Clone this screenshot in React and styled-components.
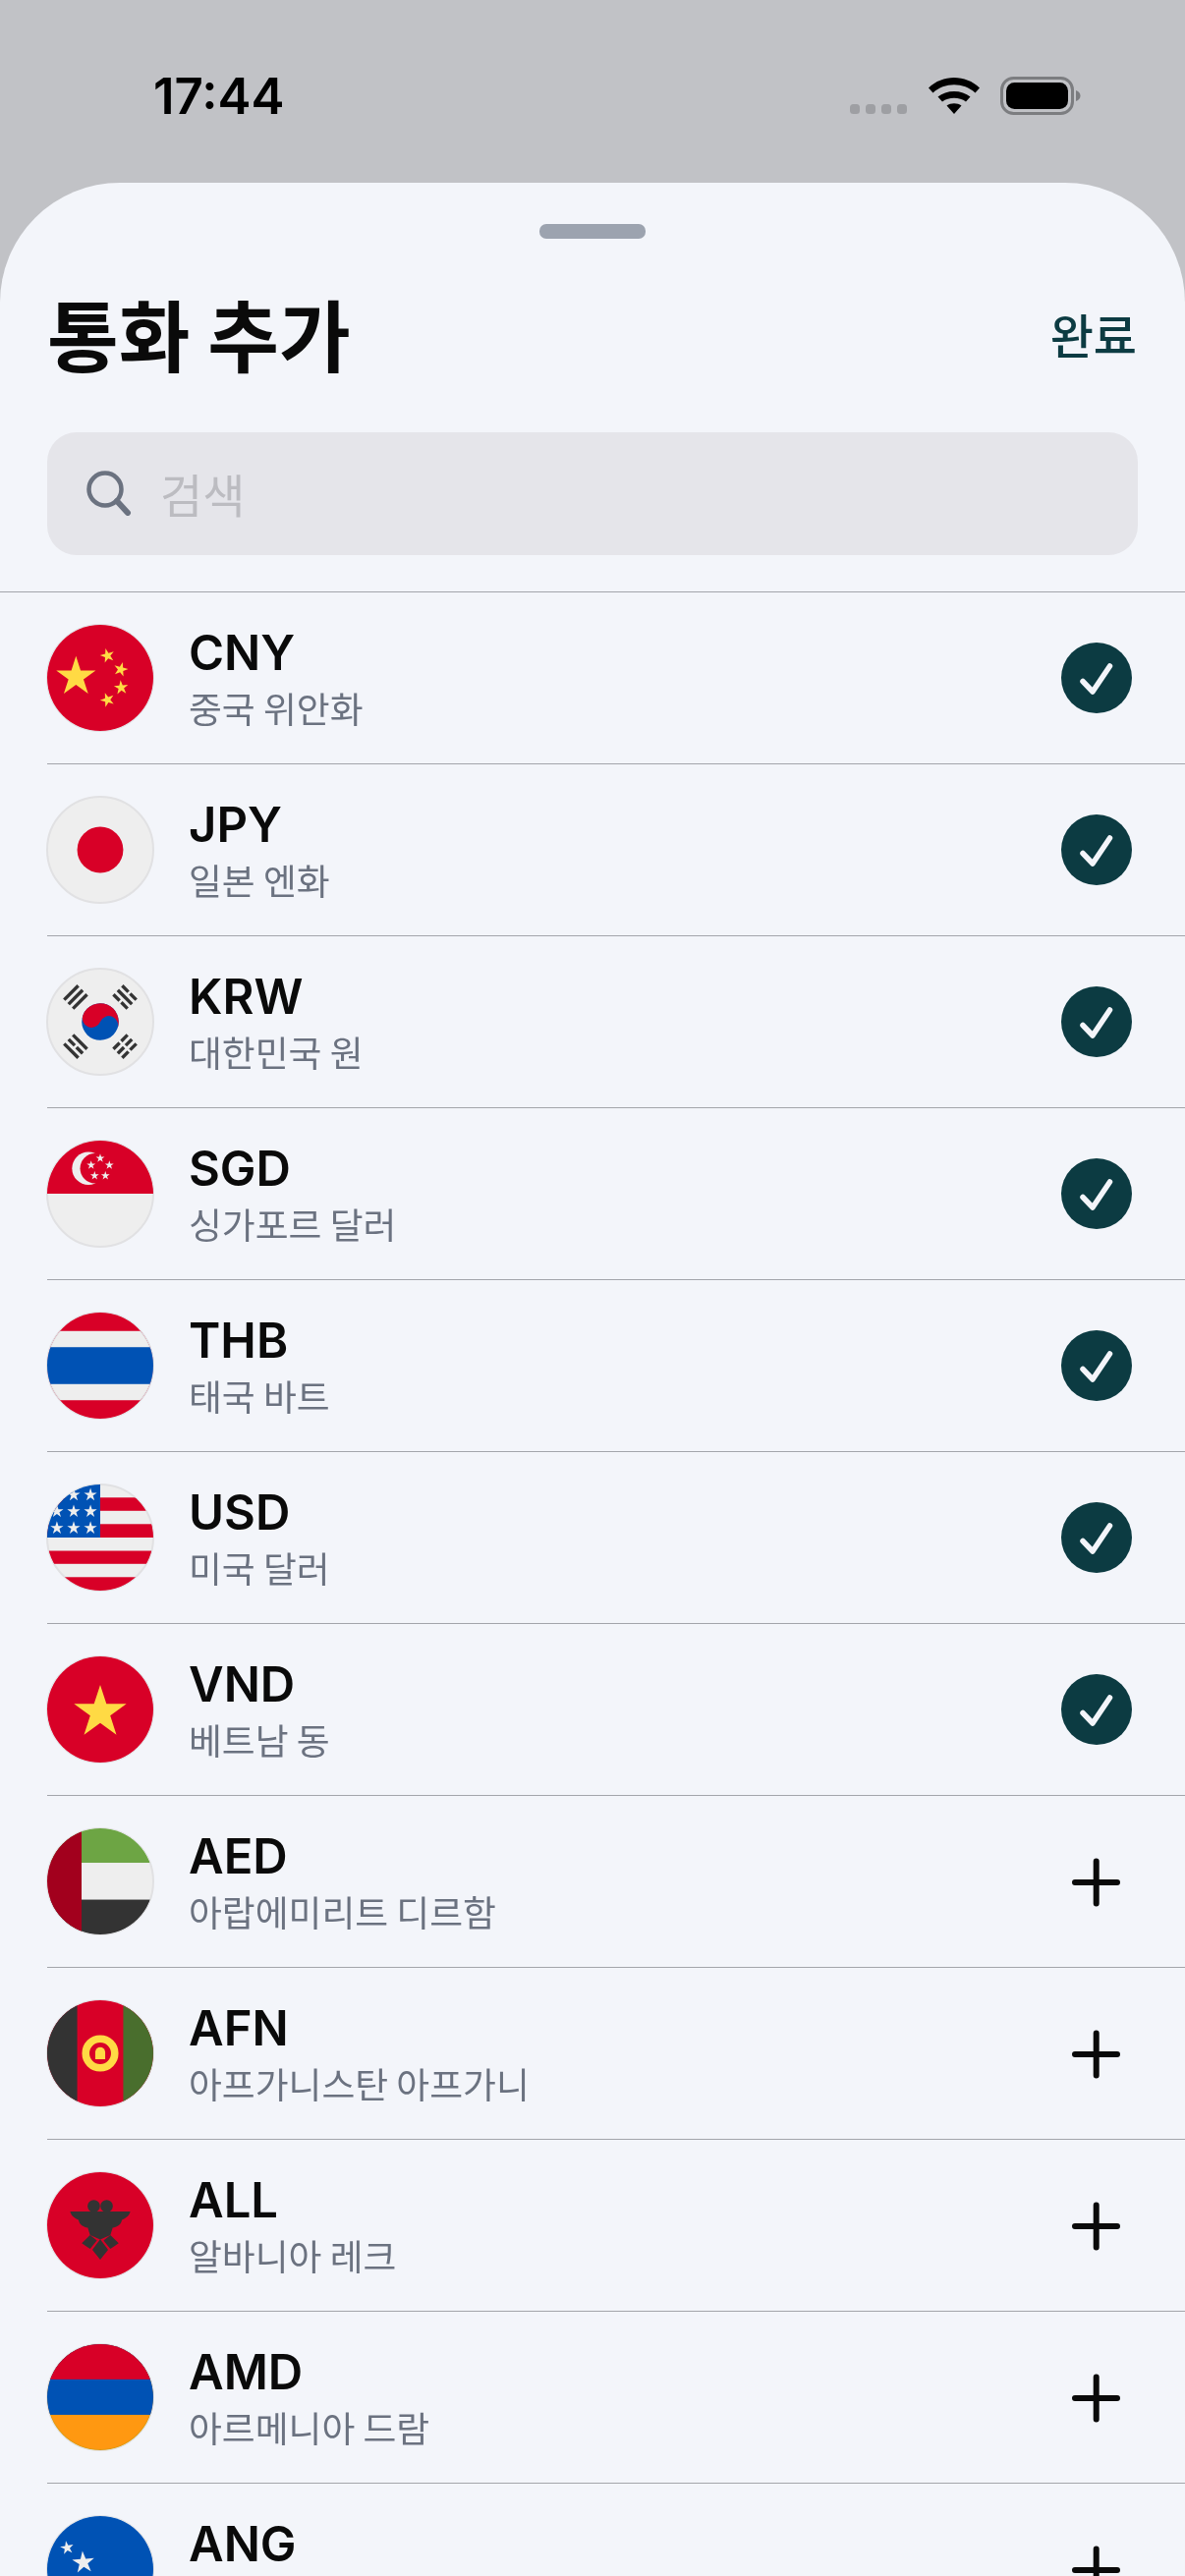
import React from "react";
import styled, { createGlobalStyle } from "styled-components";

const GlobalStyle = createGlobalStyle`
  html, body {
    margin: 0;
    padding: 0;
    width: 1206px;
    height: 2622px;
    overflow: hidden;
    background: #c1c2c6;
  }
  * { box-sizing: border-box; }
`;

const Page = styled.div`
  width: 1206px;
  height: 2622px;
  overflow: hidden;
  font-family: Inter, "Noto Sans CJK KR", sans-serif;
`;

const StatusBar = styled.div`
  height: 186px;
  padding: 78px 106px 0 156px;
  display: flex;
  justify-content: space-between;
  align-items: flex-start;
`;

const Time = styled.div`
  font-size: 51px;
  line-height: 40px;
  font-weight: 600;
  color: #000;
`;

const StatusIcons = styled.svg`
  display: block;
  width: 235px;
  height: 40px;
`;

const Sheet = styled.div`
  background: #f3f5fa;
  border-radius: 122px 122px 0 0;
  height: 2436px;
  padding-top: 42px;
`;

const Handle = styled.div`
  width: 108px;
  height: 15px;
  border-radius: 7px;
  background: #9ca3af;
  margin: 0 auto;
`;

const Header = styled.div`
  display: flex;
  justify-content: space-between;
  align-items: center;
  padding: 0 49px 6px 48px;
  height: 197px;
`;

const Title = styled.h1`
  margin: 0;
  font: 700 79px/100px "Noto Sans CJK KR", sans-serif;
  color: #0a0a0a;
`;

const DoneButton = styled.button`
  border: none;
  background: none;
  padding: 0;
  font: 500 48px/60px "Noto Sans CJK KR", sans-serif;
  color: #0c3b42;
`;

const SearchBox = styled.div`
  margin: 0 48px;
  height: 125px;
  background: #e5e5ea;
  border-radius: 30px;
  display: flex;
  align-items: center;
  gap: 29px;
  padding: 0 0 2px 40px;
`;

const Placeholder = styled.span`
  font: 400 47px/60px "Noto Sans CJK KR", sans-serif;
  color: #bcbcc1;
`;

const List = styled.div`
  margin-top: 37px;
  border-top: 1.5px solid #a3a5ab;
`;

const Row = styled.div`
  height: 175px;
  margin-left: 48px;
  padding-right: 54px;
  display: flex;
  align-items: center;
  border-bottom: 1.5px solid #a3a5ab;
`;

const FlagWrap = styled.svg`
  display: block;
  width: 108px;
  height: 108px;
  flex: none;
  overflow: visible;
`;

const FlagRing = styled.circle`
  fill: none;
  stroke: #e1e1e3;
  stroke-width: 9.5;
  mix-blend-mode: darken;
`;

const RowText = styled.div`
  flex: 1;
  align-self: flex-start;
  margin-left: 36px;
  padding-top: 33px;
  display: flex;
  flex-direction: column;
  gap: 3px;
`;

const Code = styled.div`
  font-size: 49px;
  line-height: 58px;
  font-weight: 600;
  color: #0a0a0a;
`;

const Name = styled.div`
  font: 400 36.8px/46px "Noto Sans CJK KR", sans-serif;
  color: #6b7280;
`;

const ActionIcon = styled.svg`
  display: block;
  width: 72px;
  height: 72px;
  flex: none;
`;

const RED = "#d80027";
const YELLOW = "#ffda44";
const BLUE = "#0052b4";
const LIGHT = "#eeeeee";
const DARK = "#333333";

const starPoints = (cx, cy, r, rot = 0) => {
  const pts = [];
  for (let i = 0; i < 10; i++) {
    const rad = i % 2 === 0 ? r : r * 0.382;
    const a = ((-90 + rot + i * 36) * Math.PI) / 180;
    pts.push(`${(cx + rad * Math.cos(a)).toFixed(1)},${(cy + rad * Math.sin(a)).toFixed(1)}`);
  }
  return pts.join(" ");
};

const Star = ({ x, y, r, rot, fill = LIGHT }) => (
  <polygon points={starPoints(x, y, r, rot)} fill={fill} />
);

// one trigram bar, broken in the middle when split is set
const Bar = ({ y, split }) =>
  split ? (
    <>
      <rect x="-48" y={y - 8} width="42" height="16" fill={DARK} />
      <rect x="6" y={y - 8} width="42" height="16" fill={DARK} />
    </>
  ) : (
    <rect x="-48" y={y - 8} width="96" height="16" fill={DARK} />
  );

const Trigram = ({ angle, bars }) => (
  <g transform={`translate(256 256) rotate(${angle}) translate(0 -168)`}>
    {bars.map((split, i) => (
      <Bar key={i} y={-30 + i * 30} split={split} />
    ))}
  </g>
);

const flags = {
  CNY: (
    <>
      <rect width="512" height="512" fill={RED} />
      <Star x={139} y={251} r={100} fill={YELLOW} />
      <Star x={291} y={149} r={36} rot={-15} fill={YELLOW} />
      <Star x={355} y={215} r={36} rot={15} fill={YELLOW} />
      <Star x={357} y={303} r={36} rot={-5} fill={YELLOW} />
      <Star x={291} y={362} r={36} rot={-20} fill={YELLOW} />
    </>
  ),
  JPY: (
    <>
      <rect width="512" height="512" fill={LIGHT} />
      <circle cx="256" cy="256" r="111" fill={RED} />
    </>
  ),
  KRW: (
    <>
      <rect width="512" height="512" fill={LIGHT} />
      <Trigram angle={-45} bars={[false, false, false]} />
      <Trigram angle={45} bars={[true, false, true]} />
      <Trigram angle={-135} bars={[false, true, false]} />
      <Trigram angle={135} bars={[true, true, true]} />
      <g transform="rotate(22 256 256)">
        <circle cx="256" cy="256" r="89" fill={BLUE} />
        <path d="M167 256a89 89 0 0 1 178 0a44.5 44.5 0 0 0-89 0a44.5 44.5 0 0 1-89 0z" fill={RED} />
      </g>
    </>
  ),
  SGD: (
    <>
      <rect width="512" height="512" fill={LIGHT} />
      <rect width="512" height="256" fill={RED} />
      <circle cx="199" cy="134" r="79" fill={LIGHT} />
      <circle cx="231" cy="134" r="72" fill={RED} />
      <Star x={256} y={85} r={22} />
      <Star x={300} y={118} r={22} />
      <Star x={281} y={169} r={22} />
      <Star x={229} y={169} r={22} />
      <Star x={212} y={118} r={22} />
    </>
  ),
  THB: (
    <>
      <rect width="512" height="512" fill={RED} />
      <rect y="89" width="512" height="334" fill={LIGHT} />
      <rect y="167" width="512" height="178" fill={BLUE} />
    </>
  ),
  USD: (
    <>
      <rect width="512" height="512" fill={LIGHT} />
      <rect y="63" width="512" height="64" fill={RED} />
      <rect y="191" width="512" height="65" fill={RED} />
      <rect y="320" width="512" height="63" fill={RED} />
      <rect y="447" width="512" height="65" fill={RED} />
      <rect width="256" height="256" fill={BLUE} />
      {[[128, 50], [209, 50], [47, 130], [128, 130], [209, 130], [47, 210], [128, 210], [209, 210]].map(([x, y]) => (
        <Star key={`${x}-${y}`} x={x} y={y} r={33} />
      ))}
    </>
  ),
  VND: (
    <>
      <rect width="512" height="512" fill={RED} />
      <Star x={256} y={270} r={133} fill={YELLOW} />
    </>
  ),
  AED: (
    <>
      <rect width="512" height="512" fill={LIGHT} />
      <rect width="512" height="166" fill="#6da544" />
      <rect y="344" width="512" height="168" fill={DARK} />
      <rect width="166" height="512" fill="#a2001d" />
    </>
  ),
  AFN: (
    <>
      <rect width="512" height="512" fill={RED} />
      <rect width="145" height="512" fill={DARK} />
      <rect x="367" width="145" height="512" fill="#496e2d" />
      <circle cx="256" cy="256" r="70" fill="none" stroke={YELLOW} strokeWidth="36" />
      <path d="M232 284v-34a24 24 0 0 1 48 0v34z" fill={YELLOW} />
    </>
  ),
  ALL: (
    <>
      <rect width="512" height="512" fill={RED} />
      <g fill={DARK}>
        <circle cx="225" cy="164" r="30" />
        <circle cx="287" cy="164" r="30" />
        <path d="M111 190H401C396 215 371 225 361 230C356 255 336 265 316 268L305 303L256 325L207 303L196 268C176 265 156 255 151 230C141 225 116 215 111 190Z" />
        <path d="M207 303L167 343L207 370L240 330Z" />
        <path d="M305 303L345 343L305 370L272 330Z" />
        <path d="M256 324L218 374L256 422L294 374Z" />
      </g>
    </>
  ),
  AMD: (
    <>
      <rect width="512" height="512" fill="#ff9811" />
      <rect width="512" height="341" fill={BLUE} />
      <rect width="512" height="170" fill={RED} />
    </>
  ),
  ANG: (
    <>
      <rect width="512" height="512" fill={BLUE} />
      <Star x={96} y={153} r={34} rot={-10} />
      <Star x={175} y={224} r={56} rot={-5} />
    </>
  ),
};

const currencies = [
  { code: "CNY", name: "중국 위안화", added: true },
  { code: "JPY", name: "일본 엔화", added: true },
  { code: "KRW", name: "대한민국 원", added: true },
  { code: "SGD", name: "싱가포르 달러", added: true },
  { code: "THB", name: "태국 바트", added: true },
  { code: "USD", name: "미국 달러", added: true },
  { code: "VND", name: "베트남 동", added: true },
  { code: "AED", name: "아랍에미리트 디르함" },
  { code: "AFN", name: "아프가니스탄 아프가니" },
  { code: "ALL", name: "알바니아 레크" },
  { code: "AMD", name: "아르메니아 드람" },
  { code: "ANG" },
];

const Flag = ({ code }) => {
  const clipId = `clip-${code}`;
  return (
    <FlagWrap viewBox="0 0 512 512">
      <clipPath id={clipId}>
        <circle cx="256" cy="256" r="256" />
      </clipPath>
      <g clipPath={`url(#${clipId})`}>{flags[code]}</g>
      <FlagRing cx="256" cy="256" r="256" />
    </FlagWrap>
  );
};

const Action = ({ added }) =>
  added ? (
    <ActionIcon viewBox="0 0 72 72">
      <circle cx="36" cy="36" r="36" fill="#0c3b42" />
      <path d="M22 39.5L32 50L49.500 24" fill="none" stroke="#f3f5fa" strokeWidth="5.5" strokeLinecap="round" strokeLinejoin="round" />
    </ActionIcon>
  ) : (
    <ActionIcon viewBox="0 0 72 72">
      <path d="M35.700 15.500V58.500M14 37H57" fill="none" stroke="#0a0a0a" strokeWidth="6" strokeLinecap="round" />
    </ActionIcon>
  );

const App = () => (
  <Page>
    <GlobalStyle />
    <StatusBar>
      <Time>17:44</Time>
      <StatusIcons viewBox="0 0 235 40">
        {[0, 16, 32, 48].map((x) => (
          <rect key={x} x={x} y="28" width="10" height="10" rx="3.5" fill="#9e9fa3" />
        ))}
        <g transform="translate(80 0)">
          <path d="M0 11.5C14 -2.5 38 -2.5 52 11.5L47.5 16.5C36 5.5 16 5.5 4.5 16.5Z" fill="#000" />
          <path d="M9.5 20.5C18 13 34 13 42.5 20.5L38 25.5C31.5 20.5 20.5 20.5 14 25.5Z" fill="#000" />
          <path d="M18.5 29.5C22.5 26.5 29.5 26.5 33.5 29.5L26 38Z" fill="#000" />
        </g>
        <g transform="translate(153 0)">
          <rect x="1.5" y="1.5" width="72" height="36" rx="12" fill="none" stroke="#7c7d80" strokeWidth="3" />
          <rect x="6" y="6" width="63" height="27" rx="8.5" fill="#000" />
          <path d="M77 14c3 1 4.500 3 4.500 5.500S80 24 77 25z" fill="#7c7d80" />
        </g>
      </StatusIcons>
    </StatusBar>
    <Sheet>
      <Handle />
      <Header>
        <Title>통화 추가</Title>
        <DoneButton>완료</DoneButton>
      </Header>
      <SearchBox>
        <svg width="46" height="46" viewBox="0 0 46 46">
          <circle cx="19" cy="19" r="16.500" fill="none" stroke="#6b7280" strokeWidth="4.500" />
          <path d="M31 31L42 43" stroke="#6b7280" strokeWidth="6" strokeLinecap="round" />
        </svg>
        <Placeholder>검색</Placeholder>
      </SearchBox>
      <List>
        {currencies.map((c) => (
          <Row key={c.code}>
            <Flag code={c.code} />
            <RowText>
              <Code>{c.code}</Code>
              {c.name && <Name>{c.name}</Name>}
            </RowText>
            <Action added={c.added} />
          </Row>
        ))}
      </List>
    </Sheet>
  </Page>
);

export default App;
